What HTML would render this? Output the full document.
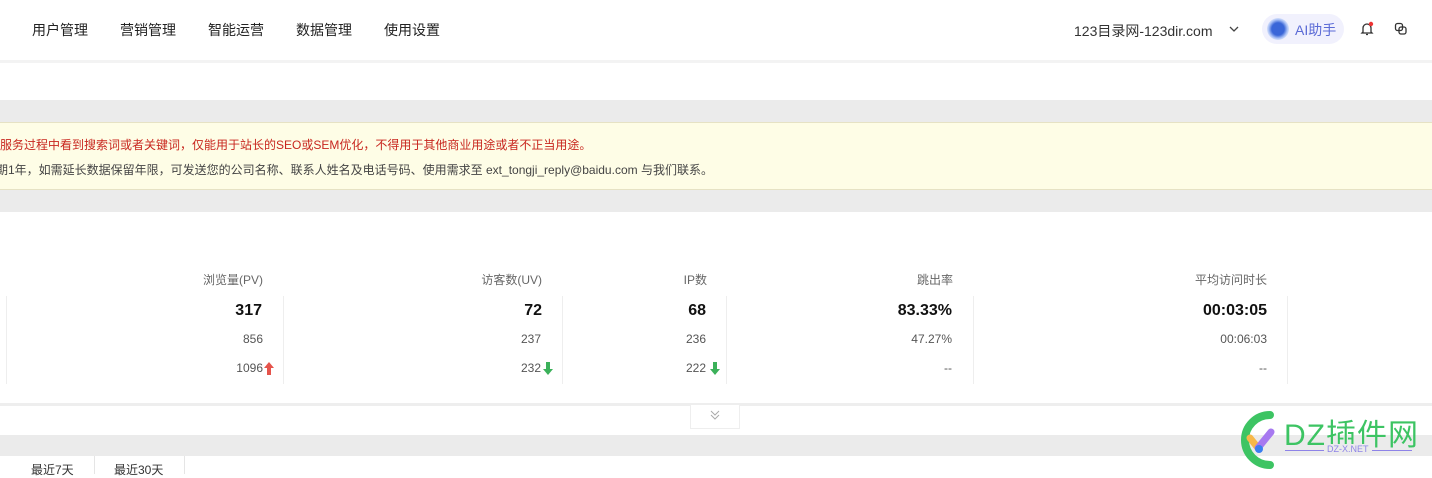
<!DOCTYPE html>
<html><head><meta charset="utf-8"><style>
*{margin:0;padding:0;box-sizing:border-box}
body{width:1432px;height:474px;overflow:hidden;background:#fff;font-family:"Liberation Sans","Noto Sans CJK SC",sans-serif;color:#333;position:relative}
.a{position:absolute;white-space:nowrap}
.nav{font-size:14px;color:#222;top:20px}
.band{position:absolute;left:0;width:1432px;background:#ebebeb}
.h{font-size:12px;color:#666;top:271px}
.v{font-size:16px;font-weight:bold;color:#111;top:302px}
.r2{font-size:12px;color:#555;top:332px}
.r3{font-size:12px;color:#555;top:361px}
.div{position:absolute;top:296px;height:88px;width:1px;background:#eee}
</style></head><body>
<div class="a nav" style="left:32px">用户管理</div>
<div class="a nav" style="left:120px">营销管理</div>
<div class="a nav" style="left:208px">智能运营</div>
<div class="a nav" style="left:296px">数据管理</div>
<div class="a nav" style="left:384px">使用设置</div>
<div class="a" style="left:1074px;top:21px;font-size:14px;color:#333">123目录网-123dir.com</div>
<svg class="a" style="left:1228px;top:24px" width="12" height="10"><path d="M2 3l4 4 4-4" stroke="#444" stroke-width="1.3" fill="none"/></svg>
<div class="a" style="left:1262px;top:14px;width:82px;height:30px;border-radius:15px;background:#f1f1fd"></div>
<div class="a" style="left:1267px;top:18px;width:22px;height:22px;border-radius:50%;background:radial-gradient(circle,#3a66d8 40%,#a9c0f5 60%,#e6ecfc 75%)"></div>
<div class="a" style="left:1295px;top:20px;font-size:14px;color:#5b6bd6">AI助手</div>
<svg class="a" style="left:1360px;top:21px" width="14" height="16"><path d="M3 11V7a4 4 0 0 1 8 0v4l1 1H2z M6 13.5h2" stroke="#333" stroke-width="1.3" fill="none"/><circle cx="11" cy="3" r="2.2" fill="#e33"/></svg>
<svg class="a" style="left:1394px;top:22px" width="14" height="14"><rect x="1.5" y="1.5" width="7" height="7" rx="2" stroke="#333" stroke-width="1.3" fill="none"/><rect x="5" y="5" width="7" height="7" rx="2" stroke="#333" stroke-width="1.3" fill="none"/></svg>
<div class="band" style="top:60px;height:3px;background:#f3f3f3"></div>
<div class="band" style="top:100px;height:22px"></div>
<div class="a" style="left:0;top:122px;width:1432px;height:68px;background:#fefde6;border-top:1px solid #e6e2c4;border-bottom:1px solid #e6e2c4"></div>
<div class="a" style="left:0;top:136px;font-size:12px;color:#c8261e">服务过程中看到搜索词或者关键词，仅能用于站长的SEO或SEM优化，不得用于其他商业用途或者不正当用途。</div>
<div class="a" style="left:-4px;top:161px;font-size:12px;color:#444">期1年，如需延长数据保留年限，可发送您的公司名称、联系人姓名及电话号码、使用需求至 ext_tongji_reply@baidu.com 与我们联系。</div>
<div class="band" style="top:190px;height:22px"></div>
<div class="a h" style="right:1169px">浏览量(PV)</div>
<div class="a h" style="right:890px">访客数(UV)</div>
<div class="a h" style="right:725px">IP数</div>
<div class="a h" style="right:479px">跳出率</div>
<div class="a h" style="right:165px">平均访问时长</div>
<div class="div" style="left:6px"></div><div class="div" style="left:283px"></div><div class="div" style="left:562px"></div><div class="div" style="left:726px"></div><div class="div" style="left:973px"></div><div class="div" style="left:1287px"></div>
<div class="a v" style="right:1170px">317</div>
<div class="a v" style="right:890px">72</div>
<div class="a v" style="right:726px">68</div>
<div class="a v" style="right:480px">83.33%</div>
<div class="a v" style="right:165px">00:03:05</div>
<div class="a r2" style="right:1169px">856</div>
<div class="a r2" style="right:891px">237</div>
<div class="a r2" style="right:726px">236</div>
<div class="a r2" style="right:480px">47.27%</div>
<div class="a r2" style="right:165px">00:06:03</div>
<div class="a r3" style="right:1169px">1096</div>
<svg class="a" style="left:264px;top:362px" width="10" height="13"><path d="M5 0L10 6H7V13H3V6H0z" fill="#e5534b"/></svg>
<div class="a r3" style="right:891px">232</div>
<svg class="a" style="left:543px;top:362px" width="10" height="13"><path d="M5 13L10 7H7V0H3V7H0z" fill="#3bb15a"/></svg>
<div class="a r3" style="right:726px">222</div>
<svg class="a" style="left:710px;top:362px" width="10" height="13"><path d="M5 13L10 7H7V0H3V7H0z" fill="#3bb15a"/></svg>
<div class="a r3" style="right:480px">--</div>
<div class="a r3" style="right:165px">--</div>
<div class="band" style="top:403px;height:3px;background:#eee"></div>
<div class="a" style="left:690px;top:405px;width:50px;height:24px;border:1px solid #eee;border-top:none;background:#fff"></div>
<svg class="a" style="left:709px;top:409px" width="12" height="12"><path d="M2 2l4 4 4-4M2 6l4 4 4-4" stroke="#aaa" fill="none"/></svg>
<div class="band" style="top:435px;height:21px"></div>
<div class="a" style="left:0;top:456px;width:185px;height:18px;border-right:1px solid #e5e5e5"></div>
<div class="a" style="left:94px;top:456px;width:1px;height:18px;background:#e5e5e5"></div>
<div class="a" style="left:31px;top:461px;font-size:12px;color:#333">最近7天</div>
<div class="a" style="left:114px;top:461px;font-size:12px;color:#333">最近30天</div>
<svg class="a" style="left:1230px;top:405px" width="50" height="70"><path d="M40 10A24 24 0 1 0 40 60" stroke="#3dc463" stroke-width="8" fill="none" stroke-linecap="round"/><path d="M20 33l8 10" stroke="#f7b84a" stroke-width="7" stroke-linecap="round"/><path d="M28 43l13-16" stroke="#a779f0" stroke-width="7" stroke-linecap="round"/><circle cx="29" cy="44" r="4" fill="#3a7ef0"/></svg>
<div class="a" style="left:1284px;top:410px;font-size:30px;color:#3dc463;letter-spacing:1px">DZ插件网</div>
<div class="a" style="left:1285px;top:450px;width:127px;height:1px;background:#8e83e8"></div>
<div class="a" style="left:1324px;top:444px;font-size:9px;line-height:11px;color:#8e83e8;background:#ebebeb;padding:0 3px">DZ-X.NET</div>
</body></html>
